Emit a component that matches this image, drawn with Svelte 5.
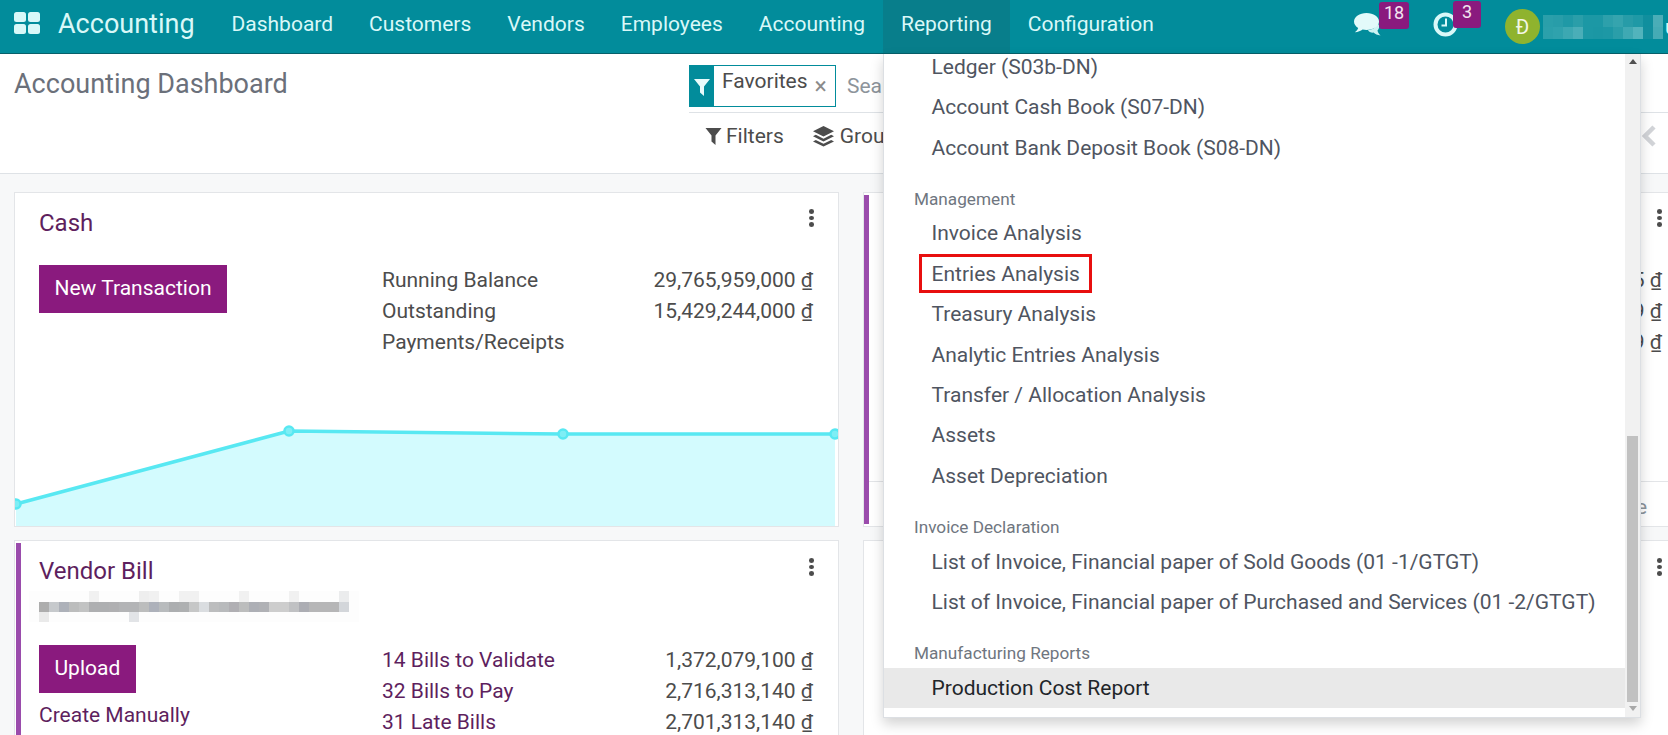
<script>
  const navItems = ['Dashboard', 'Customers', 'Vendors', 'Employees', 'Accounting', 'Reporting', 'Configuration'];

  const menu = [
    { items: ['Ledger (S03b-DN)', 'Account Cash Book (S07-DN)', 'Account Bank Deposit Book (S08-DN)'] },
    { title: 'Management', items: ['Invoice Analysis', 'Entries Analysis', 'Treasury Analysis', 'Analytic Entries Analysis', 'Transfer / Allocation Analysis', 'Assets', 'Asset Depreciation'] },
    { title: 'Invoice Declaration', items: ['List of Invoice, Financial paper of Sold Goods (01 -1/GTGT)', 'List of Invoice, Financial paper of Purchased and Services (01 -2/GTGT)'] },
    { title: 'Manufacturing Reports', items: ['Production Cost Report'] }
  ];

  // pixelated blur over the user name and the vendor bill alias
  const nameCells = [
    ['#2a9faa', '#289da9', '#1f99a6', '#2a9ea9', '#1c98a5', '#1c98a5', '#2da0ab', '#35a4ae', '#279ca8', '#1f99a6', '#108f9e', '#4aadb7'],
    ['#2ba0ab', '#2fa2ad', '#3ca8b2', '#4aaeb8', '#1c98a5', '#1b97a4', '#1d98a5', '#2a9ea9', '#3fa9b3', '#52b3bc', '#128f9e', '#45abb5']
  ];
  const aliasMid = ['#adadad', '#c6c9cc', '#adb1b9', '#bcbdbd', '#c2c3c3', '#aeafb1', '#aeafb1', '#b0b0b2', '#b3b4b6', '#b3b4b6', '#bcbdbd', '#adb1ba', '#b8bbbd', '#acaeb0', '#aeb0b1', '#c6c7c7', '#dadde0', '#bcbdbe', '#b8babc', '#b0afb3', '#bcbdbd', '#adafb5', '#b0b1b5', '#cdcdcd', '#cdcdcd', '#c0c1c3', '#acadb3', '#b6b6b7', '#b6b6b7', '#b6b6b7', '#d3d6da'];
  const aliasTop = [0, 0, 0, 0, 0, 2, 0, 0, 0, 0, 3, 2, 0, 0, 2, 2, 0, 0, 0, 0, 2, 0, 0, 0, 0, 2, 0, 0, 0, 0, 4];
  const aliasBottom = [5, 0, 0, 0, 0, 0, 0, 0, 0, 7, 0, 0, 0, 0, 0, 0, 0, 0, 0, 0, 0, 0, 0, 0, 0, 0, 0, 0, 0, 0, 0];
  const faint = ['#fbfbfb', '#f9f9f9', '#f1f1f1', '#eeeeee', '#ebeced', '#eaeaea', '#e8e9ea', '#e2e4e7'];

  const cashRows = [
    { label: 'Running Balance', value: '29,765,959,000' },
    { label: 'Outstanding Payments/Receipts', value: '15,429,244,000' }
  ];
  const billRows = [
    { label: '14 Bills to Validate', value: '1,372,079,100' },
    { label: '32 Bills to Pay', value: '2,716,313,140' },
    { label: '31 Late Bills', value: '2,701,313,140' }
  ];
  // only the tail of these shows past the open dropdown
  const sideRows = ['5', '9', '9'];
</script>

<div class="page">
  <header class="nav">
    <svg class="apps" width="26" height="22" viewBox="0 0 26 22">
      <rect x="0" y="0" width="12" height="10" rx="2.5" />
      <rect x="14" y="0" width="12" height="10" rx="2.5" />
      <rect x="0" y="12" width="12" height="10" rx="2.5" />
      <rect x="14" y="12" width="12" height="10" rx="2.5" />
    </svg>
    <span class="brand">Accounting</span>
    <nav class="items">
      {#each navItems as item}
        <a class:active={item === 'Reporting'} href="#top">{item}</a>
      {/each}
    </nav>
    <div class="systray">
      <div class="tray-item comments">
        <svg width="27" height="23" viewBox="0 0 27 23">
          <path class="rear" d="M14 17 C18 17 22 15 23 10 C25.500 11.500 26 15 23.500 17.500 C23.800 19 24.800 21 26.500 22.500 C23.500 22.300 21 21 19.500 19.600 C17 19.800 15 19 14 17 Z" />
          <path d="M12.500 0 C19.500 0 25 3.800 25 8.500 C25 13.200 19.500 17 12.500 17 C11 17 9.800 16.900 8.600 16.600 C6.800 18 4 19.200 0.800 19.200 C2.600 17.800 3.800 16.300 4.200 14.900 C1.600 13.400 0 11.100 0 8.500 C0 3.800 5.500 0 12.500 0 Z" />
        </svg>
        <span class="badge b-18">18</span>
      </div>
      <div class="tray-item clock">
        <svg width="25" height="25" viewBox="0 0 25 25">
          <circle cx="12.500" cy="12.500" r="10" />
          <path d="M13 6.500 V13.500 H8.500" />
        </svg>
        <span class="badge b-3">3</span>
      </div>
      <span class="avatar">Đ</span>
      <svg class="user-blur" width="120" height="24" viewBox="0 0 120 24">
        {#each nameCells as row, r}
          {#each row as fill, c}
            <rect x={c * 10} y={r * 12} width="10" height="12" {fill} />
          {/each}
        {/each}
      </svg>
      <span class="user-end">u</span>
    </div>
  </header>

  <section class="panel">
    <h1>Accounting Dashboard</h1>
    <div class="search-side">
      <div class="search">
        <div class="facet">
          <span class="facet-icon">
            <svg width="16" height="17" viewBox="0 0 16 17"><path d="M0 0 H16 L10 7.500 V17 L6 13.500 V7.500 Z" /></svg>
          </span>
          <span class="facet-label">Favorites</span>
          <span class="facet-x">×</span>
        </div>
        <span class="search-input">Search...</span>
      </div>
      <div class="tools">
        <button class="tool">
          <svg width="17" height="17" viewBox="0 0 16 17"><path d="M0 0 H16 L10 7.500 V17 L6 13.500 V7.500 Z" /></svg>
          Filters
        </button>
        <button class="tool">
          <svg width="21" height="21" viewBox="0 0 21 21">
            <path d="M10.500 0 L21 5.200 L10.500 10.400 L0 5.200 Z" />
            <path d="M2.800 8.800 L10.500 12.700 L18.200 8.800 L21 10.300 L10.500 15.500 L0 10.300 Z" />
            <path d="M2.800 13.900 L10.500 17.800 L18.200 13.900 L21 15.400 L10.500 20.600 L0 15.400 Z" />
          </svg>
          Group By
        </button>
        <svg class="chevron" width="14" height="22" viewBox="0 0 14 22"><path d="M12 2 L3 11 L12 20" /></svg>
      </div>
    </div>
  </section>

  <main class="dash">
    <article class="card">
      <div class="head">
        <h2>Cash</h2>
        <span class="dots"><i></i><i></i><i></i></span>
      </div>
      <div class="body">
        <div class="actions">
          <button class="primary">New Transaction</button>
        </div>
        <div class="rows">
          {#each cashRows as row}
            <span class="label">{row.label}</span>
            <span class="value">{row.value} ₫</span>
          {/each}
        </div>
      </div>
      <svg class="graph" width="823" height="111" viewBox="0 0 823 111">
        <path class="area" d="M1 89 L274 16 L548 19 L820 19 V111 H1 Z" />
        <path class="line" d="M1 89 L274 16 L548 19 L820 19" />
        <circle cx="1" cy="89" r="4.500" />
        <circle cx="274" cy="16" r="4.500" />
        <circle cx="548" cy="19" r="4.500" />
        <circle cx="820" cy="19" r="4.500" />
      </svg>
    </article>

    <article class="card marked">
      <div class="head">
        <span class="dots"><i></i><i></i><i></i></span>
      </div>
      <div class="body">
        <div class="actions"></div>
        <div class="rows">
          {#each sideRows as value}
            <span class="label"></span>
            <span class="value">{value} ₫</span>
          {/each}
        </div>
      </div>
      <div class="card-foot"><span>Date</span></div>
    </article>

    <article class="card marked vendor-card">
      <div class="head vendor">
        <h2>Vendor Bill</h2>
        <span class="dots"><i></i><i></i><i></i></span>
      </div>
      <svg class="alias" width="330" height="31" viewBox="0 0 330 31">
        <rect width="330" height="31" fill="#fdfdfd" />
        {#each aliasMid as fill, c}
          {#if aliasTop[c]}<rect x={10 + c * 10} y="0" width="10" height="11" fill={faint[aliasTop[c]]} />{/if}
          <rect x={10 + c * 10} y="11" width="10" height="10" {fill} />
          {#if aliasBottom[c]}<rect x={10 + c * 10} y="21" width="10" height="10" fill={faint[aliasBottom[c]]} />{/if}
        {/each}
      </svg>
      <div class="body tight">
        <div class="actions">
          <button class="primary">Upload</button>
          <a class="manual" href="#top">Create Manually</a>
        </div>
        <div class="rows links">
          {#each billRows as row}
            <a class="label" href="#top">{row.label}</a>
            <span class="value">{row.value} ₫</span>
          {/each}
        </div>
      </div>
    </article>

    <article class="card">
      <div class="head vendor">
        <span class="dots"><i></i><i></i><i></i></span>
      </div>
    </article>
  </main>

  <div class="dropdown">
    <div class="menu">
      {#each menu as group}
        {#if group.title}<div class="group-title">{group.title}</div>{/if}
        {#each group.items as item}
          <div class="entry" class:hover={item === 'Production Cost Report'}>
            {item}
            {#if item === 'Entries Analysis'}<span class="callout"></span>{/if}
          </div>
        {/each}
      {/each}
    </div>
    <div class="scrollbar">
      <span class="arrow up"></span>
      <span class="thumb"></span>
      <span class="arrow down"></span>
    </div>
  </div>
</div>

<style>
:global(body) {
  margin: 0;
  font-family: Roboto, "Noto Sans", sans-serif;
}

.page {
  position: relative;
  width: 1668px;
  height: 735px;
  overflow: hidden;
  background: #f7f8f9;
  color: #4c4c4c;
  font-size: 21px;
}

.nav {
  display: flex;
  align-items: center;
  height: 53px;
  border-bottom: 1px solid #07606a;
  background: #028c9b;
  color: #d9f8f8;
}

.apps {
  margin-left: 14px;
  margin-top: -7px;
  fill: #d9f8f8;
}

.brand {
  margin-left: 18px;
  margin-bottom: 6px;
  font-size: 27px;
  width: 155.500px;
}

.items {
  display: flex;
  height: 100%;
}

.items a {
  display: flex;
  align-items: center;
  padding: 0 18px 6px;
  color: inherit;
  text-decoration: none;
}

.items a.active {
  background: #087e8b;
}

.systray {
  display: flex;
  align-items: center;
  margin-left: auto;
  height: 100%;
}

.tray-item {
  position: relative;
  display: flex;
}

.comments svg {
  fill: #e3fafa;
}

.comments .rear {
  fill: #cdf3f3;
}

.comments {
  margin-top: -4px;
}

.clock {
  margin-left: 52px;
  margin-top: -4px;
}

.clock circle {
  fill: none;
  stroke: #d9f8f8;
  stroke-width: 4;
}

.clock path {
  fill: none;
  stroke: #d9f8f8;
  stroke-width: 2;
}

.badge {
  position: absolute;
  top: -11px;
  height: 27px;
  box-sizing: border-box;
  border-radius: 3px;
  background: #8a1a7e;
  color: #f2e5f0;
  font-size: 18px;
  line-height: 22px;
  text-align: center;
}

.b-18 {
  left: 25px;
  width: 30px;
}

.b-3 {
  left: 20px;
  width: 28px;
}

.avatar {
  display: flex;
  align-items: center;
  justify-content: center;
  width: 35px;
  height: 35px;
  margin-left: 47px;
  border-radius: 50%;
  background: #8fb32e;
  color: #f4f7e6;
  font-size: 20px;
}

.user-blur {
  margin-left: 3px;
}

.user-end {
  margin-left: 2px;
  width: 3px;
  overflow: hidden;
  font-size: 20px;
}

.panel {
  display: grid;
  grid-template-columns: 689px 1fr;
  box-sizing: border-box;
  height: 120px;
  border-bottom: 1px solid #dee2e6;
  background: #fff;
}

h1 {
  margin: 14px 0 0 14px;
  color: #6b707a;
  font-size: 27px;
  font-weight: 400;
  line-height: 32px;
}

.search {
  display: flex;
  align-items: flex-start;
  height: 47px;
  margin-top: 11px;
  border-bottom: 1px solid #dee2e6;
}

.facet {
  display: flex;
  box-sizing: border-box;
  width: 147px;
  height: 42px;
  border: 1px solid #028c9b;
}

.facet-icon {
  display: flex;
  align-items: center;
  justify-content: center;
  width: 25px;
  margin-left: -1px;
  background: #028c9b;
}

.facet-icon svg {
  fill: #e9fbfb;
  margin-top: 2px;
}

.facet-label {
  margin-left: 8px;
  line-height: 31px;
}

.facet-x {
  margin-left: 7px;
  margin-top: 6px;
  color: #8b8b8b;
  font-size: 23px;
  line-height: 30px;
}

.search-input {
  margin-left: 11px;
  line-height: 42px;
  color: #8d949b;
}

.tools {
  display: flex;
  align-items: center;
  height: 46px;
  padding-left: 16px;
}

.tool {
  display: flex;
  align-items: center;
  gap: 4px;
  margin-right: 29px;
  padding: 0;
  border: none;
  background: none;
  color: #4c4c4c;
  font: inherit;
}

.tool svg {
  fill: #4c4c4c;
}

.tool:nth-child(2) {
  gap: 6px;
}

.chevron {
  margin-left: auto;
  margin-right: 12px;
  fill: none;
  stroke: #d2d4d8;
  stroke-width: 4.500;
}

.dash {
  display: grid;
  grid-template-columns: 825px 824px;
  grid-auto-rows: 335px;
  gap: 13px 24px;
  padding: 18px 0 0 14px;
}

.card {
  position: relative;
  display: flex;
  flex-direction: column;
  box-sizing: border-box;
  overflow: hidden;
  border: 1px solid #e3e5e8;
  background: #fff;
}

.marked::before {
  content: "";
  position: absolute;
  top: 2px;
  bottom: 2px;
  left: 0;
  width: 5px;
  background: #9a4cac;
}

.vendor-card::before {
  left: 1px;
}

.head {
  display: flex;
  justify-content: space-between;
  min-height: 30px;
  padding: 15px 24px 0 24px;
}

.head.vendor {
  padding-top: 15px;
}

h2 {
  margin: 0;
  color: #5e1f5e;
  font-size: 24px;
  font-weight: 400;
  line-height: 30px;
}

.dots {
  display: flex;
  flex-direction: column;
  gap: 2px;
  margin-left: auto;
  margin-top: 1px;
}

.vendor .dots {
  margin-top: 2px;
}

.dots i {
  width: 5px;
  height: 4.500px;
  border-radius: 50%;
  background: #4c4c4c;
}

.body {
  display: grid;
  grid-template-columns: 343px 431px;
  margin: 27px 0 0 24px;
}

.body.tight {
  margin-top: 23px;
}

.actions {
  display: flex;
  flex-direction: column;
  align-items: flex-start;
}

.primary {
  height: 48px;
  padding: 0 15.500px 2px;
  border: none;
  background: #8a1a7e;
  color: #fff;
  font: inherit;
}

.manual {
  margin-top: 7px;
  color: #5e1f5e;
  line-height: 30px;
  text-decoration: none;
}

.rows {
  display: grid;
  grid-template-columns: 210px 1fr;
  grid-auto-rows: auto;
  line-height: 31px;
}

.links .label {
  color: #5e1f5e;
  text-decoration: none;
  white-space: nowrap;
}

.value {
  text-align: right;
  min-height: 31px;
}

.graph {
  margin-top: auto;
  flex: none;
}

.area {
  fill: #d3fbfe;
}

.line {
  fill: none;
  stroke: #58e8f2;
  stroke-width: 3.500;
}

.graph circle {
  fill: #7eeef5;
  stroke: #58e8f2;
  stroke-width: 2.500;
}

.alias {
  margin: 5px 0 0 14px;
  flex: none;
}

.card-foot {
  margin-top: auto;
  height: 45px;
  box-sizing: border-box;
  border-top: 1px solid #e3e5e8;
  padding-left: 740px;
  line-height: 50px;
  color: #8d949b;
}

.dropdown {
  position: absolute;
  top: 54px;
  left: 883px;
  display: flex;
  box-sizing: border-box;
  width: 758px;
  height: 664px;
  border: 1px solid #dcdfe3;
  border-top: none;
  background: #fff;
  box-shadow: 0 6px 12px rgba(0, 0, 0, 0.175);
}

.menu {
  flex: 1;
  overflow: hidden;
  margin-top: -7px;
}

.entry {
  position: relative;
  height: 40.4px;
  padding-left: 47.500px;
  line-height: 40.4px;
  color: #4f5561;
}

.entry.hover {
  background: #e9e9e9;
  color: #212529;
}

.group-title {
  box-sizing: border-box;
  height: 45.300px;
  padding: 18.500px 0 0 30px;
  color: #6f7680;
  font-size: 17.200px;
  line-height: 24px;
}

.callout {
  position: absolute;
  top: 0;
  left: 35px;
  width: 173px;
  height: 39px;
  box-sizing: border-box;
  border: 3px solid #e80f0f;
}

.scrollbar {
  display: flex;
  flex-direction: column;
  align-items: center;
  width: 15px;
  background: #f1f1f1;
}

.thumb {
  width: 11px;
  height: 266px;
  margin-top: auto;
  background: #c1c1c1;
}

.arrow {
  width: 0;
  height: 0;
  border-left: 4px solid transparent;
  border-right: 4px solid transparent;
}

.arrow.up {
  margin-top: 5px;
  border-bottom: 5px solid #505050;
}

.arrow.down {
  margin: 4px 0 6px;
  border-top: 5px solid #a8a8a8;
}
</style>
